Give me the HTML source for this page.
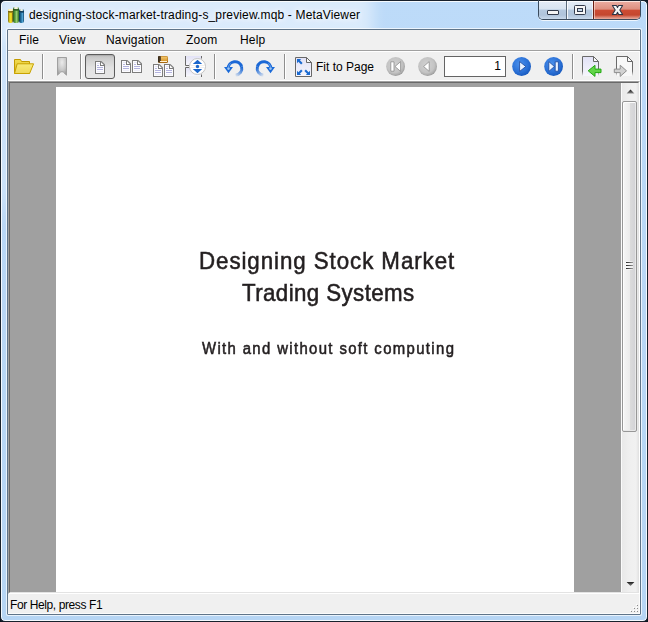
<!DOCTYPE html>
<html><head><meta charset="utf-8">
<style>
*{margin:0;padding:0;box-sizing:border-box}
html,body{width:648px;height:622px;overflow:hidden;background:#0d1520}
body{position:relative;font-family:"Liberation Sans",sans-serif;font-size:12px;color:#000}
.a{position:absolute}
#frame{left:0;top:0;width:648px;height:622px;border:1px solid #18212c;border-radius:5px;
 background:linear-gradient(180deg,#bddbf9 0px,#bbd9f8 100px,#b9d7f5 300px,#b6d5f4 100%);overflow:hidden;
 box-shadow:inset 0 0 0 1px rgba(255,255,255,.85)}
#title{left:29px;top:8px;font-size:12px;letter-spacing:.15px;color:#000;white-space:nowrap;
 text-shadow:0 0 6px #fff,0 0 8px #fff}
#client{left:7px;top:29px;width:634px;height:586px;border:1px solid #5f7489;background:#f0f0f0;border-radius:1px;
 box-shadow:0 0 0 1px rgba(255,255,255,.7),inset -1px -1px 0 #fbfbfb}
.menu{top:33px;white-space:nowrap;letter-spacing:.2px}
#menusep{left:8px;top:50px;width:632px;height:1px;background:#a0a0a0}
#menusep2{left:8px;top:51px;width:632px;height:1px;background:#fff}
#tbbot{left:8px;top:80px;width:632px;height:1px;background:#fff}
#view{left:8px;top:81px;width:632px;height:513px;background:#a0a0a0;border-top:1px solid #a0a0a0;border-left:1px solid #a0a0a0;border-right:1px solid #fff;border-bottom:1px solid #fff}
#view2{left:9px;top:82px;width:630px;height:511px;border-top:1px solid #696969;border-left:1px solid #696969;border-right:1px solid #e3e3e3;border-bottom:1px solid #e3e3e3}
#page{left:56px;top:87px;width:518px;height:505px;background:#fff}
.sep{width:1px;height:25px;top:54px;background:#8e8e8e;box-shadow:1px 0 0 #fff}
#status{left:10px;top:598px;white-space:nowrap;letter-spacing:-.4px}
.ptxt{color:#231f20;white-space:nowrap;-webkit-text-stroke:.55px #231f20;transform:scaleX(.93);transform-origin:0 0}
</style></head><body>
<div id="frame" class="a"><div class="a" style="left:0px;top:-12px;width:372px;height:56px;border-radius:14px;background:rgba(255,255,255,.45);filter:blur(7px)"></div><div class="a" style="left:-10px;top:10px;width:22px;height:200px;border-radius:10px;background:rgba(255,255,255,.4);filter:blur(12px)"></div></div>
<div id="title" class="a">designing-stock-market-trading-s_preview.mqb - MetaViewer</div>

<!-- title buttons -->
<div class="a" style="left:538px;top:0;width:103px;height:20px;border:1px solid #3a4a5c;border-top:none;border-radius:0 0 5px 5px;box-shadow:0 1px 0 rgba(255,255,255,.75);overflow:hidden">
<div class="a" style="left:0;top:1px;width:27px;height:18px;background:linear-gradient(180deg,#fbfdff 0,#fbfdff 1px,#e2ebf6 1px,#d8e4f1 8px,#b5c9df 9px,#b0c4db 14px,#c8d8ea 18px)"></div>
<div class="a" style="left:27px;top:1px;width:1px;height:18px;background:#5b6b7c"></div>
<div class="a" style="left:28px;top:1px;width:26px;height:18px;background:linear-gradient(180deg,#fbfdff 0,#fbfdff 1px,#e2ebf6 1px,#d8e4f1 8px,#b5c9df 9px,#b0c4db 14px,#c8d8ea 18px);box-shadow:inset 1px 0 0 rgba(255,255,255,.85),inset -1px 0 0 rgba(255,255,255,.6)"></div>
<div class="a" style="left:54px;top:1px;width:48px;height:18px;border-left:1px solid #6a1e12;background:linear-gradient(180deg,#fbe4de 0,#fbe4de 1px,#eaaa9e 1px,#de9080 8px,#cc4b33 9.5px,#c4472f 14px,#d77c69 16px,#e9ad9f 18px);box-shadow:inset 1px 0 0 rgba(255,230,220,.6)"></div>
</div>
<div class="a" style="left:547px;top:10px;width:12px;height:5px;border:1px solid #323a4b;border-radius:1px;background:#f4f4f4"></div>
<div class="a" style="left:574px;top:5px;width:12px;height:10px;border:1px solid #323a4b;border-radius:1.5px;background:#f6f6f6"></div>
<div class="a" style="left:577px;top:8px;width:6px;height:4px;border:1px solid #323a4b;background:#c6d8ea"></div>
<svg class="a" style="left:0;top:0" width="648" height="22" viewBox="0 0 648 22">
<path d="M612.4 5.5 H616.4 L617.5 7.6 L618.6 5.5 H622.6 L619.8 9.95 L622.6 14.5 H618.6 L617.5 12.3 L616.4 14.5 H612.4 L615.2 9.95 Z" fill="#f6f6f6" stroke="#2c3344" stroke-width="1.05" stroke-linejoin="round"/>
</svg>
<!-- app icon -->
<div class="a" style="left:8px;top:9px;width:5px;height:14px;border-radius:2px 2px 2px 2px;background:linear-gradient(90deg,#7a6a10,#f5e020 40%,#e8d020 70%,#5a4a10)"></div>
<div class="a" style="left:8px;top:9px;width:5px;height:2px;border-radius:2px;background:#fff6c0"></div>
<div class="a" style="left:13px;top:7px;width:6px;height:16px;border-radius:2px;background:linear-gradient(90deg,#2a5a20,#5aa040 35%,#9ad070 60%,#2a6a20)"></div>
<div class="a" style="left:14px;top:7px;width:4px;height:2px;border-radius:1px;background:#f4f0e0"></div>
<div class="a" style="left:19px;top:9px;width:5px;height:14px;border-radius:2px;background:linear-gradient(90deg,#0a3050,#2070a0 40%,#50a0d0 70%,#104870)"></div>
<div class="a" style="left:20px;top:9px;width:3px;height:2px;border-radius:1px;background:#f0f0e0"></div>
<div class="a" style="left:8px;top:11px;width:5px;height:2px;background:linear-gradient(180deg,#5a4a10,#a08a20);opacity:.8"></div>
<div class="a" style="left:13px;top:9px;width:6px;height:2px;background:linear-gradient(180deg,#1a3a10,#3a7a30);opacity:.8"></div>
<div class="a" style="left:19px;top:11px;width:5px;height:2px;background:linear-gradient(180deg,#082030,#1a5a88);opacity:.8"></div>
<div id="client" class="a"></div>
<div class="a menu" style="left:19px">File</div>
<div class="a menu" style="left:59px">View</div>
<div class="a menu" style="left:106px">Navigation</div>
<div class="a menu" style="left:186px">Zoom</div>
<div class="a menu" style="left:240px">Help</div>
<div id="menusep" class="a"></div>
<div id="menusep2" class="a"></div>
<div id="tbbot" class="a"></div>
<div class="a sep" style="left:42px"></div>
<div class="a sep" style="left:80px"></div>
<div class="a sep" style="left:214px"></div>
<div class="a sep" style="left:284px"></div>
<div class="a sep" style="left:572px"></div>
<!-- toolbar -->
<div class="a" style="left:85px;top:54px;width:30px;height:25px;border:1px solid #5c5c5c;border-radius:3px;background:linear-gradient(180deg,#c2c2c2 0,#d4d4d4 6px,#dedede 11px,#e2e2e2 12px,#e6e6e6 22px);box-shadow:inset 0 1px 1px rgba(0,0,0,.12)"></div>
<svg class="a" style="left:0;top:0" width="648" height="100" viewBox="0 0 648 100">
<defs>
<linearGradient id="fb" x1="0" y1="0" x2="0" y2="1"><stop offset="0" stop-color="#f2dc50"/><stop offset="1" stop-color="#d8b828"/></linearGradient>
<linearGradient id="ff" x1="0" y1="0" x2="0" y2="1"><stop offset="0" stop-color="#f8ea78"/><stop offset="1" stop-color="#eed858"/></linearGradient>
<radialGradient id="bm" cx="0.5" cy="0.28" r="0.85"><stop offset="0" stop-color="#ececec"/><stop offset="0.55" stop-color="#c6c6c6"/><stop offset="1" stop-color="#8c8c8c"/></radialGradient>
<linearGradient id="lav" x1="0" y1="0" x2="0" y2="1"><stop offset="0" stop-color="#e2e2f6"/><stop offset="1" stop-color="#f6f6fc"/></linearGradient>
<radialGradient id="gc" cx="0.45" cy="0.42" r="0.58"><stop offset="0" stop-color="#d2d2d2"/><stop offset="0.7" stop-color="#c4c4c4"/><stop offset="0.88" stop-color="#b0b0b0"/><stop offset="1" stop-color="#9c9c9c"/></radialGradient>
<radialGradient id="bc" cx="0.4" cy="0.35" r="0.65"><stop offset="0" stop-color="#4a90ec"/><stop offset="0.7" stop-color="#2a70d6"/><stop offset="1" stop-color="#1a5cc0"/></radialGradient>
<linearGradient id="rot" gradientUnits="userSpaceOnUse" x1="234.59" y1="76.27" x2="241.57" y2="66.74"><stop offset="0" stop-color="#1b68d6" stop-opacity="0"/><stop offset="0.55" stop-color="#1b68d6" stop-opacity=".6"/><stop offset="1" stop-color="#1b68d6"/></linearGradient>
<linearGradient id="pgf" x1="0" y1="0" x2="0" y2="1"><stop offset="0" stop-color="#6a6a6a"/><stop offset="0.75" stop-color="#6a6a6a"/><stop offset="1" stop-color="#6a6a6a" stop-opacity="0"/></linearGradient>
<linearGradient id="bk" x1="0" y1="0" x2="0" y2="1"><stop offset="0" stop-color="#f4c870"/><stop offset="1" stop-color="#d89a30"/></linearGradient><linearGradient id="bks" x1="0" y1="0" x2="1" y2="0"><stop offset="0" stop-color="#2e2416"/><stop offset="1" stop-color="#6a5030"/></linearGradient></defs>
<!-- folder -->
<path d="M14.5 59.5 H20.5 L21.5 61.5 H29.5 V73.5 H14.5 Z" fill="url(#fb)" stroke="#c29a00"/>
<path d="M17.2 63.8 H33.6 L29.6 73.5 H14.5 Z" fill="url(#ff)" stroke="#c8a200" stroke-linejoin="round"/>
<!-- bookmark -->
<path d="M57.5 57.5 H66.5 V75.2 C65 74.5 64 71.6 62 71.6 C60 71.6 59 74.5 57.5 75.2 Z" fill="url(#bm)" stroke="#a0a0a0"/>
<path d="M95 61 h6 v4 h4 v9 h-10 Z M96 62 v11 h8 v-7 h-4 v-4 Z" fill="#7c7c7c" fill-rule="evenodd" shape-rendering="crispEdges"/>
<rect x="96" y="62" width="4" height="11" fill="#fcfcff"/><rect x="100" y="66" width="4" height="7" fill="#fcfcff"/>
<path d="M101 62 L104 65 H101 Z" fill="#fdfdfd"/>
<path d="M101 61.3 L104.7 65" stroke="#7c7c7c" stroke-width="1.1"/>
<rect x="97" y="63" width="3" height="1" fill="#e6e6f4"/>
<rect x="97" y="65" width="2" height="1" fill="#b8b8e2"/>
<rect x="97" y="67" width="6" height="1" fill="#b2b2de"/>
<rect x="97" y="69" width="6" height="1" fill="#b2b2de"/>
<rect x="97" y="71" width="6" height="1" fill="#eeeef8"/>
<path d="M121 60 h6 v4 h4 v9 h-10 Z M122 61 v11 h8 v-7 h-4 v-4 Z" fill="#7c7c7c" fill-rule="evenodd" shape-rendering="crispEdges"/>
<rect x="122" y="61" width="4" height="11" fill="#fcfcff"/><rect x="126" y="65" width="4" height="7" fill="#fcfcff"/>
<path d="M127 61 L130 64 H127 Z" fill="#fdfdfd"/>
<path d="M127 60.3 L130.7 64" stroke="#7c7c7c" stroke-width="1.1"/>
<rect x="123" y="62" width="3" height="1" fill="#e6e6f4"/>
<rect x="123" y="64" width="2" height="1" fill="#b8b8e2"/>
<rect x="123" y="66" width="6" height="1" fill="#b2b2de"/>
<rect x="123" y="68" width="6" height="1" fill="#b2b2de"/>
<rect x="123" y="70" width="6" height="1" fill="#eeeef8"/>
<path d="M132 60 h6 v4 h4 v9 h-10 Z M133 61 v11 h8 v-7 h-4 v-4 Z" fill="#7c7c7c" fill-rule="evenodd" shape-rendering="crispEdges"/>
<rect x="133" y="61" width="4" height="11" fill="#fcfcff"/><rect x="137" y="65" width="4" height="7" fill="#fcfcff"/>
<path d="M138 61 L141 64 H138 Z" fill="#fdfdfd"/>
<path d="M138 60.3 L141.7 64" stroke="#7c7c7c" stroke-width="1.1"/>
<rect x="134" y="62" width="3" height="1" fill="#e6e6f4"/>
<rect x="134" y="64" width="2" height="1" fill="#b8b8e2"/>
<rect x="134" y="66" width="6" height="1" fill="#b2b2de"/>
<rect x="134" y="68" width="6" height="1" fill="#b2b2de"/>
<rect x="134" y="70" width="6" height="1" fill="#eeeef8"/>
<path d="M153 64 h6 v4 h4 v9 h-10 Z M154 65 v11 h8 v-7 h-4 v-4 Z" fill="#7c7c7c" fill-rule="evenodd" shape-rendering="crispEdges"/>
<rect x="154" y="65" width="4" height="11" fill="#fcfcff"/><rect x="158" y="69" width="4" height="7" fill="#fcfcff"/>
<path d="M159 65 L162 68 H159 Z" fill="#fdfdfd"/>
<path d="M159 64.3 L162.7 68" stroke="#7c7c7c" stroke-width="1.1"/>
<rect x="155" y="66" width="3" height="1" fill="#e6e6f4"/>
<rect x="155" y="68" width="2" height="1" fill="#b8b8e2"/>
<rect x="155" y="70" width="6" height="1" fill="#b2b2de"/>
<rect x="155" y="72" width="6" height="1" fill="#b2b2de"/>
<rect x="155" y="74" width="6" height="1" fill="#eeeef8"/>
<path d="M164 64 h6 v4 h4 v9 h-10 Z M165 65 v11 h8 v-7 h-4 v-4 Z" fill="#7c7c7c" fill-rule="evenodd" shape-rendering="crispEdges"/>
<rect x="165" y="65" width="4" height="11" fill="#fcfcff"/><rect x="169" y="69" width="4" height="7" fill="#fcfcff"/>
<path d="M170 65 L173 68 H170 Z" fill="#fdfdfd"/>
<path d="M170 64.3 L173.7 68" stroke="#7c7c7c" stroke-width="1.1"/>
<rect x="166" y="66" width="3" height="1" fill="#e6e6f4"/>
<rect x="166" y="68" width="2" height="1" fill="#b8b8e2"/>
<rect x="166" y="70" width="6" height="1" fill="#b2b2de"/>
<rect x="166" y="72" width="6" height="1" fill="#b2b2de"/>
<rect x="166" y="74" width="6" height="1" fill="#eeeef8"/>
<!-- book -->
<rect x="158" y="56" width="10" height="7" rx="1.5" fill="#a86a10"/>
<rect x="160.5" y="56.5" width="7" height="4.5" fill="url(#bk)"/>
<rect x="158" y="56" width="3" height="6.5" rx="1" fill="url(#bks)"/>
<rect x="160" y="61" width="7" height="1" fill="#fff2d8"/>
<!-- continuous -->
<rect x="186" y="56" width="15" height="9" fill="url(#lav)"/>
<rect x="186" y="68" width="15" height="8" fill="url(#lav)"/>
<path d="M185.5 56 V65.5 H189 M185.5 77 V67.5 H189 M201.5 56 V58.5 M201.5 77 V74.5" stroke="#6a6a6a" fill="none"/>
<circle cx="197.5" cy="66.5" r="8" fill="#fff" stroke="#c4c4c4"/>
<path d="M191 65.5 H204 M191 67.5 H204" stroke="#ececec" stroke-width=".8"/>
<path d="M192.8 63.9 L197.5 59.7 L202.2 63.9 Z M192.8 69 L202.2 69 L197.5 73.2 Z" fill="#1a66cc"/>
<circle cx="197.5" cy="66.5" r="1.7" fill="#1a66cc"/>
<!-- rotate -->
<g>
<path d="M241.57 66.74 A6.8 6.8 0 0 0 228.2 68.5" stroke="#1b68d6" stroke-width="3" fill="none"/><path d="M235.59 75.27 A6.8 6.8 0 0 0 241.57 66.74" stroke="url(#rot)" stroke-width="3" fill="none"/><path d="M230.6 63.4 A6.8 6.8 0 0 0 228.3 67.5" stroke="#7fb2f0" stroke-width=".9" fill="none" opacity=".8"/>
<path d="M224 67 L233 67 L228.5 73.2 Z" fill="#1a6ad8"/>
<circle cx="228.5" cy="68.6" r="1.3" fill="#9cc4f0"/>
</g>
<g transform="translate(499,0) scale(-1,1)">
<path d="M241.57 66.74 A6.8 6.8 0 0 0 228.2 68.5" stroke="#1b68d6" stroke-width="3" fill="none"/><path d="M235.59 75.27 A6.8 6.8 0 0 0 241.57 66.74" stroke="url(#rot)" stroke-width="3" fill="none"/><path d="M230.6 63.4 A6.8 6.8 0 0 0 228.3 67.5" stroke="#7fb2f0" stroke-width=".9" fill="none" opacity=".8"/>
<path d="M224 67 L233 67 L228.5 73.2 Z" fill="#1a6ad8"/>
<circle cx="228.5" cy="68.6" r="1.3" fill="#9cc4f0"/>
</g>
<!-- fit page -->
<path d="M295.5 57.5 H306.5 L311.5 62.5 V76.5 H295.5 Z" fill="url(#lav)" stroke="#686868"/>
<path d="M306.5 57.5 V62.5 H311.5 Z" fill="#fafafa" stroke="#686868"/>
<path d="M297 59 H301.2 L299.9 60.3 L302.6 63 L301.1 64.5 L298.4 61.8 L297 63.2 Z" fill="#1a6ad0"/>
<path d="M297 75 H301.2 L299.9 73.7 L302.6 71 L301.1 69.5 L298.4 72.2 L297 70.8 Z" fill="#1a6ad0"/>
<path d="M310 75 H305.8 L307.1 73.7 L304.4 71 L305.9 69.5 L308.6 72.2 L310 70.8 Z" fill="#1a6ad0"/>
<!-- nav -->
<circle cx="395.6" cy="66.5" r="9.4" fill="url(#gc)"/>
<circle cx="427.6" cy="66.5" r="9.4" fill="url(#gc)"/>
<path d="M390.8 61.8 H394 V71.2 H390.8 Z M400.6 61.6 V71.4 L395 66.5 Z" fill="#fff" stroke="#8c8c8c" stroke-width=".8" stroke-linejoin="round"/>
<path d="M429.2 61.6 V71.4 L423.6 66.5 Z" fill="#fff" stroke="#8c8c8c" stroke-width=".8" stroke-linejoin="round"/>
<circle cx="521.6" cy="66.5" r="9.4" fill="url(#bc)"/>
<circle cx="553.6" cy="66.5" r="9.4" fill="url(#bc)"/>
<path d="M519.6 61.6 V71.4 L525.8 66.5 Z" fill="#eaf3ff" stroke="#17449a" stroke-width=".8" stroke-linejoin="round"/>
<path d="M548.8 61.6 V71.4 L554.4 66.5 Z M555.2 61.8 H558.4 V71.2 H555.2 Z" fill="#eaf3ff" stroke="#17449a" stroke-width=".8" stroke-linejoin="round"/>
<!-- back/forward -->
<path d="M582.5 76 V56.5 H593.5 L598.5 61.5 V76" fill="url(#lav)" stroke="url(#pgf)"/>
<path d="M593.5 56.5 V61.5 H598.5 Z" fill="#fafafa" stroke="#686868"/>
<path d="M588.2 70.8 L595 65.3 V69.1 H601 V72.6 H595 V76.4 Z" fill="#62d448" stroke="#22a812" stroke-linejoin="round"/>
<path d="M616.5 76 V56.5 H627.5 L632.5 61.5 V76" fill="#f8f8f8" stroke="url(#pgf)"/>
<path d="M627.5 56.5 V61.5 H632.5 Z" fill="#fafafa" stroke="#686868"/>
<path d="M614.3 69.1 H620.2 V65.2 L626.5 70.8 L620.2 76.4 V72.6 H614.3 Z" fill="#d2d2d2" stroke="#8e8e8e" stroke-linejoin="round"/>
</svg>
<div class="a" style="left:444px;top:56px;width:62px;height:21px;border:1px solid #646464;background:#fff"></div>
<div class="a" style="left:444px;top:59px;width:57px;text-align:right;font-size:12px">1</div>
<div class="a" style="left:316px;top:60px;font-size:12px;white-space:nowrap;letter-spacing:0px">Fit to Page</div>
<div id="view" class="a"></div>
<div id="view2" class="a"></div>
<div id="page" class="a"></div>
<div class="a ptxt" style="left:198.8px;top:247.4px;font-size:24px;letter-spacing:1.0px">Designing Stock Market</div>
<div class="a ptxt" style="left:242px;top:279px;font-size:24px;letter-spacing:.43px">Trading Systems</div>
<div class="a ptxt" style="left:202px;top:339.9px;font-size:16px;letter-spacing:1.47px">With and without soft computing</div>
<!-- scrollbar -->
<div class="a" style="left:621px;top:83px;width:17px;height:509px;background:linear-gradient(90deg,#fbfbfb 0,#fbfbfb 1px,#e9e9e9 1px,#efefef 8px,#f1f1f1 15px,#e6e6e6 17px)"></div>
<svg class="a" style="left:626px;top:89px" width="9" height="6" viewBox="0 0 9 6"><defs><linearGradient id="ga" x1="0" y1="0" x2="0" y2="1"><stop offset="0" stop-color="#1a1a1a"/><stop offset="1" stop-color="#8a8a8a"/></linearGradient></defs><path d="M4.5 0.6 L8.4 4.6 L0.6 4.6 Z" fill="url(#ga)"/></svg>
<svg class="a" style="left:626px;top:581px" width="9" height="6" viewBox="0 0 9 6"><defs><linearGradient id="gb" x1="0" y1="0" x2="0" y2="1"><stop offset="0" stop-color="#1a1a1a"/><stop offset="1" stop-color="#8a8a8a"/></linearGradient></defs><path d="M0.6 1 L8.4 1 L4.5 5 Z" fill="url(#gb)"/></svg>
<div class="a" style="left:622px;top:101px;width:15px;height:331px;border:1px solid #979797;border-radius:2px;background:linear-gradient(90deg,#f6f6f6 0,#ececec 50%,#dcdcdc 50%,#d2d2d6 100%);box-shadow:inset 1px 1px 0 #fdfdfd,inset -1px -1px 0 #e8e8e8"></div>
<div class="a" style="left:625px;top:261px;width:8px;height:9px;background:rgba(255,255,255,.55);border-radius:2px"></div>
<div class="a" style="left:626px;top:262px;width:7px;height:1px;background:linear-gradient(90deg,#2a2a2a,#505050 40%,#9a9a9a)"></div>
<div class="a" style="left:626px;top:265px;width:7px;height:1px;background:linear-gradient(90deg,#2a2a2a,#505050 40%,#9a9a9a)"></div>
<div class="a" style="left:626px;top:268px;width:7px;height:1px;background:linear-gradient(90deg,#2a2a2a,#505050 40%,#9a9a9a)"></div>
<!-- grip -->
<div class="a" style="left:636px;top:604px;width:1px;height:1px;background:#fff"></div><div class="a" style="left:637px;top:605px;width:1px;height:1px;background:#8a8a8a"></div>
<div class="a" style="left:633px;top:607px;width:1px;height:1px;background:#fff"></div><div class="a" style="left:634px;top:608px;width:1px;height:1px;background:#8a8a8a"></div>
<div class="a" style="left:636px;top:607px;width:1px;height:1px;background:#fff"></div><div class="a" style="left:637px;top:608px;width:1px;height:1px;background:#8a8a8a"></div>
<div class="a" style="left:630px;top:610px;width:1px;height:1px;background:#fff"></div><div class="a" style="left:631px;top:611px;width:1px;height:1px;background:#8a8a8a"></div>
<div class="a" style="left:633px;top:610px;width:1px;height:1px;background:#fff"></div><div class="a" style="left:634px;top:611px;width:1px;height:1px;background:#8a8a8a"></div>
<div class="a" style="left:636px;top:610px;width:1px;height:1px;background:#fff"></div><div class="a" style="left:637px;top:611px;width:1px;height:1px;background:#8a8a8a"></div>
<div id="status" class="a">For Help, press F1</div>
</body></html>
